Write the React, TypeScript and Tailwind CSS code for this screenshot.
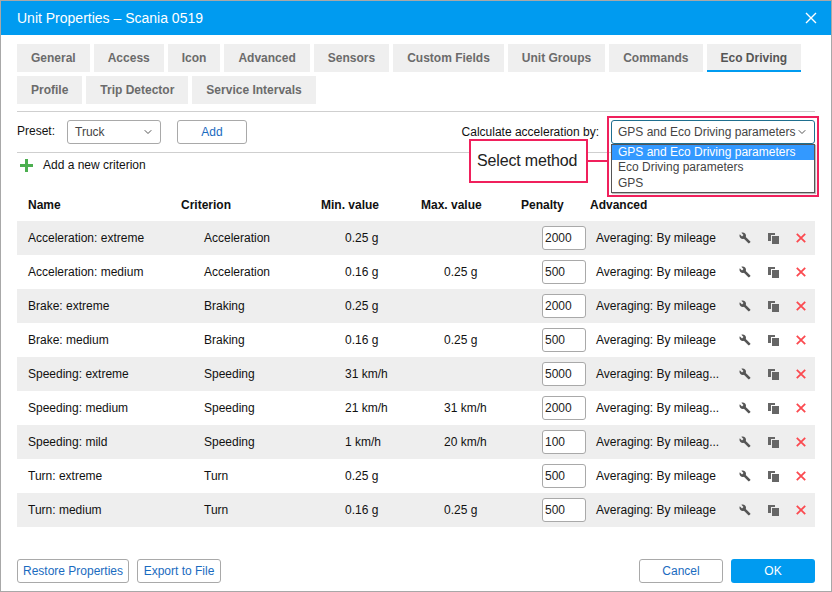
import { ChevronDown } from "lucide-react";

const tabsTop = ["General", "Access", "Icon", "Advanced", "Sensors", "Custom Fields", "Unit Groups", "Commands", "Eco Driving"];
const tabsBottom = ["Profile", "Trip Detector", "Service Intervals"];

const rows = [
	{ name: "Acceleration: extreme", criterion: "Acceleration", min: "0.25 g", max: "", penalty: "2000", advanced: "Averaging: By mileage" },
	{ name: "Acceleration: medium", criterion: "Acceleration", min: "0.16 g", max: "0.25 g", penalty: "500", advanced: "Averaging: By mileage" },
	{ name: "Brake: extreme", criterion: "Braking", min: "0.25 g", max: "", penalty: "2000", advanced: "Averaging: By mileage" },
	{ name: "Brake: medium", criterion: "Braking", min: "0.16 g", max: "0.25 g", penalty: "500", advanced: "Averaging: By mileage" },
	{ name: "Speeding: extreme", criterion: "Speeding", min: "31 km/h", max: "", penalty: "5000", advanced: "Averaging: By mileag..." },
	{ name: "Speeding: medium", criterion: "Speeding", min: "21 km/h", max: "31 km/h", penalty: "2000", advanced: "Averaging: By mileag..." },
	{ name: "Speeding: mild", criterion: "Speeding", min: "1 km/h", max: "20 km/h", penalty: "100", advanced: "Averaging: By mileag..." },
	{ name: "Turn: extreme", criterion: "Turn", min: "0.25 g", max: "", penalty: "500", advanced: "Averaging: By mileage" },
	{ name: "Turn: medium", criterion: "Turn", min: "0.16 g", max: "0.25 g", penalty: "500", advanced: "Averaging: By mileage" },
];

function Tab({ label }: { label: string }) {
	const active = label === "Eco Driving";
	return (
		<div
			className={`flex h-7 items-center whitespace-nowrap bg-[#efefef] px-[14px] text-xs font-bold ${
				active ? "border-b-2 border-[#009bf0] pt-0.5 text-[#555]" : "text-[#6b6b6b]"
			}`}
		>
			{label}
		</div>
	);
}

function OutlineButton({ label, className }: { label: string; className: string }) {
	return (
		<button className={`flex h-6 items-center justify-center rounded-[3px] border border-[#a9a9a9] bg-white text-xs text-[#1a6bc0] ${className}`}>
			{label}
		</button>
	);
}

function WrenchIcon() {
	return (
		<svg viewBox="0 0 24 24" className="h-3 w-3 fill-[#555]">
			<path d="M22.7 19l-9.1-9.1c.9-2.3.4-5-1.5-6.9-2-2-5-2.4-7.4-1.3L9 6 6 9 1.6 4.7C.4 7.1.9 10.1 2.9 12.1c1.9 1.9 4.6 2.4 6.9 1.5l9.1 9.1c.4.4 1 .4 1.4 0l2.3-2.3c.5-.4.5-1.1.1-1.4z" />
		</svg>
	);
}

function CopyIcon() {
	return (
		<svg viewBox="0 0 11 11" className="h-[11px] w-[11px]">
			<path d="M0 0h7v2H3v6H0z" fill="#666" />
			<rect x="4" y="3" width="7" height="8" fill="#666" />
		</svg>
	);
}

function CrossIcon() {
	return (
		<svg viewBox="0 0 10 10" className="h-2.5 w-2.5 stroke-[#fb4a50]" strokeWidth="1.8">
			<path d="M0.8 0.8l8.4 8.4M9.2 0.8l-8.4 8.4" />
		</svg>
	);
}

export default function App() {
	return (
		<div className="relative flex h-[592px] w-[832px] flex-col border border-[#a8a8a8] bg-white font-['Liberation_Sans',Arial,sans-serif] text-xs text-[#111]">
			{/* Header */}
			<header className="flex h-[34px] shrink-0 items-center justify-between bg-[#009bf0] pl-4 pr-[14px] text-white">
				<h1 className="text-sm font-normal">Unit Properties – Scania 0519</h1>
				<svg viewBox="0 0 12 12" className="h-3 w-3 stroke-white" strokeWidth="1.4">
					<path d="M1 1l10 10M11 1L1 11" />
				</svg>
			</header>

			<div className="flex flex-1 flex-col pl-4 pr-4">
				{/* Tabs */}
				<div className="mt-[9px] flex gap-1">
					{tabsTop.map((t) => (
						<Tab key={t} label={t} />
					))}
				</div>
				<div className="mt-1 flex gap-1 border-b border-[#cfcfcf] pb-[7px]">
					{tabsBottom.map((t) => (
						<Tab key={t} label={t} />
					))}
				</div>

				{/* Preset */}
				<div className="flex h-[41px] items-center justify-between border-b border-[#cfcfcf]">
					<div className="flex items-center">
						<span className="w-[50px] -translate-y-px">Preset:</span>
						<div className="flex h-6 w-[94px] items-center justify-between rounded-[3px] border border-[#a9a9a9] pl-[7px] pr-1.5 text-[#444]">
							Truck
							<ChevronDown className="h-3 w-3 text-[#555]" />
						</div>
						<OutlineButton label="Add" className="ml-4 w-[70px]" />
					</div>
					<div className="flex items-center">
						<span className="mr-[12px]">Calculate acceleration by:</span>
						<div className="flex h-6 w-[204px] items-center justify-between rounded-[3px] border border-[#1f6f8f] pl-[6px] pr-1.5 text-[#444]">
							GPS and Eco Driving parameters
							<ChevronDown className="h-3 w-3 text-[#555]" />
						</div>
					</div>
				</div>

				{/* Add criterion */}
				<div className="flex h-6 items-center pl-[3px]">
					<svg viewBox="0 0 13 13" className="h-[13px] w-[13px] fill-[#4caf50]">
						<path d="M5 0h3v5h5v3H8v5H5V8H0V5h5z" />
					</svg>
					<span className="ml-[10px]">Add a new criterion</span>
				</div>

				{/* Table head */}
				<div className="mt-[18px] grid h-[20px] grid-cols-[153px_140px_100px_100px_69px_1fr] items-center pl-[11px] font-bold">
					<span>Name</span>
					<span>Criterion</span>
					<span>Min. value</span>
					<span>Max. value</span>
					<span>Penalty</span>
					<span>Advanced</span>
				</div>

				{/* Rows */}
				<div className="mt-[6px] flex flex-col">
					{rows.map((r) => (
						<div
							key={r.name}
							className="grid h-[34px] grid-cols-[176px_141px_99px_98px_54px_143px_29px_28px_1fr] items-center pl-[11px] odd:bg-[#eeeeee]"
						>
							<span>{r.name}</span>
							<span>{r.criterion}</span>
							<span>{r.min}</span>
							<span>{r.max}</span>
							<input
								readOnly
								value={r.penalty}
								className="h-6 w-11 rounded-[3px] border border-[#a9a9a9] bg-white px-[2px] text-xs text-[#222] outline-none"
							/>
							<span className="whitespace-nowrap">{r.advanced}</span>
							<WrenchIcon />
							<CopyIcon />
							<CrossIcon />
						</div>
					))}
				</div>

				{/* Footer */}
				<div className="mt-8 flex items-center">
					<OutlineButton label="Restore Properties" className="w-[112px]" />
					<OutlineButton label="Export to File" className="ml-2 w-[84px]" />
					<OutlineButton label="Cancel" className="ml-auto w-[84px]" />
					<button className="ml-2 flex h-6 w-[84px] items-center justify-center rounded-[3px] bg-[#009bf0] text-xs text-white">OK</button>
				</div>
			</div>

			{/* Open dropdown */}
			<div className="absolute left-[610px] top-[143px] z-10 h-[49px] w-[204px] border border-[#555] bg-white text-[#444] shadow-[1px_1px_1px_#bbb]">
				<div className="flex h-[15px] items-center bg-[#3399ff] pb-0.5 pl-[6px] text-white">GPS and Eco Driving parameters</div>
				<div className="flex h-[16px] items-center pb-0.5 pl-[6px]">Eco Driving parameters</div>
				<div className="flex h-[15px] items-center pb-0.5 pl-[6px]">GPS</div>
			</div>

			{/* Callout */}
			<div className="absolute left-[606px] top-[115px] z-20 h-[81px] w-[212px] border-2 border-[#f0205c]" />
			<div className="absolute left-[587px] top-[159px] z-20 h-0.5 w-5 bg-[#f0205c]" />
			<div className="absolute left-[468px] top-[138px] z-20 flex h-[44px] w-[119px] items-center border-2 border-[#f0205c] bg-white pl-[6px] text-base tracking-[-0.15px] text-[#222]">
				Select method
			</div>
		</div>
	);
}
